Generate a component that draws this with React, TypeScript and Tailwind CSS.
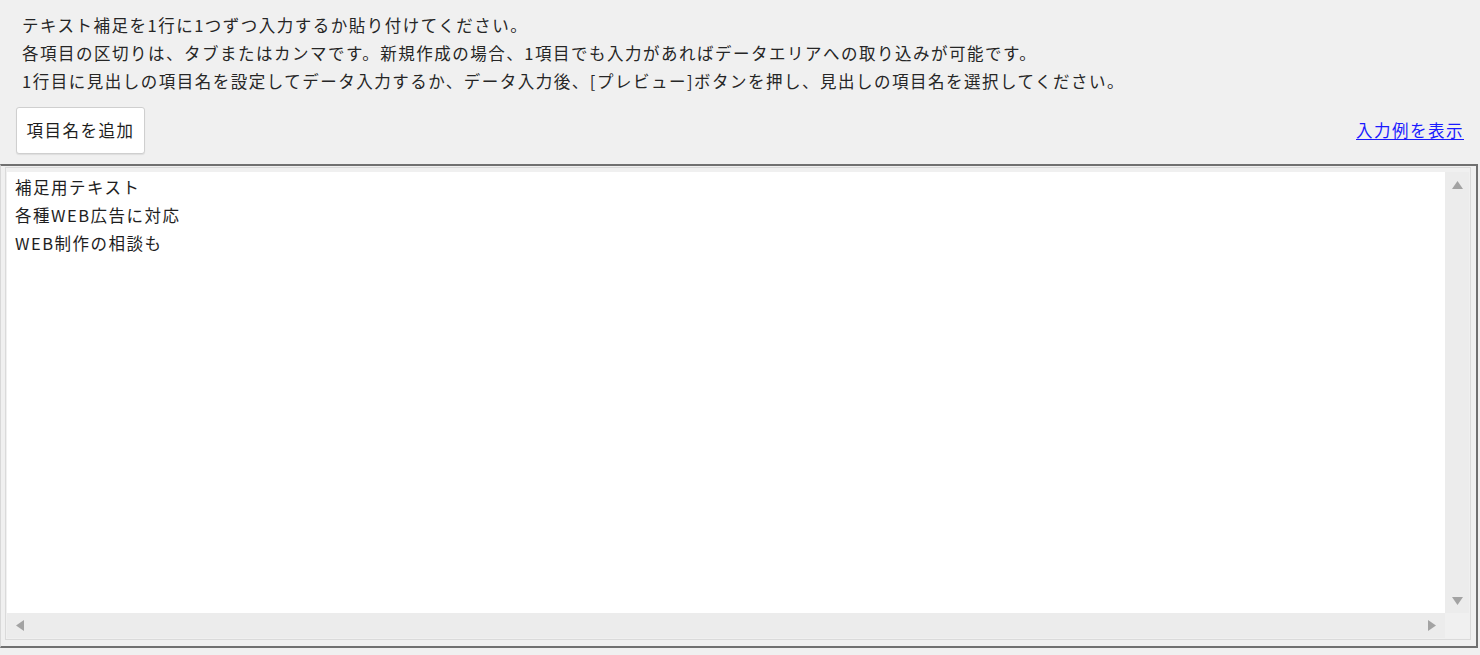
export default function App() {
  const notes = [
    "テキスト補足を1行に1つずつ入力するか貼り付けてください。",
    "各項目の区切りは、タブまたはカンマです。新規作成の場合、1項目でも入力があればデータエリアへの取り込みが可能です。",
    "1行目に見出しの項目名を設定してデータ入力するか、データ入力後、[プレビュー]ボタンを押し、見出しの項目名を選択してください。",
  ];
  const rows = ["補足用テキスト", "各種WEB広告に対応", "WEB制作の相談も"];

  return (
    <div
      className="w-[1480px] h-[655px] overflow-hidden bg-[#f0f0f0] text-[#262626]"
      style={{ fontFamily: '"Noto Sans CJK JP", "Noto Sans", sans-serif' }}
    >
      <div className="pl-[22px] pt-[11px] text-[16.5px] tracking-[1.5px] leading-[28px]">
        {notes.map((n) => (
          <div key={n}>{n}</div>
        ))}
      </div>

      <div className="flex items-center justify-between pl-[16px] pr-[16px] mt-[12px] h-[47px]">
        <button className="w-[129px] h-[47px] bg-white border border-[#cfcfcf] rounded-[3px] shadow-[0_1px_1px_rgba(0,0,0,0.08)] text-[16.5px] tracking-[1.5px] text-[#1e1e1e]">
          項目名を追加
        </button>
        <a href="#" className="text-[16.5px] tracking-[1.5px] text-[#1a1aff] underline underline-offset-2">
          入力例を表示
        </a>
      </div>

      <div className="mt-[10px] w-[1478px] h-[484px] border-t-2 border-r-2 border-b-2 border-[#707070] border-l border-l-[#d8d8d8] pl-[4px] pt-[1px]">
        <div className="w-[1466px] h-[473px] border border-[#dadada] pt-[4px] pl-[1px] pr-[1px] flex flex-col">
          <div className="flex h-[441px]">
            <div className="flex-1 bg-white pl-[8px] pt-[1px] text-[16.5px] tracking-[1.5px] leading-[28px] text-[#1e1e1e]">
              {rows.map((r) => (
                <div key={r}>{r}</div>
              ))}
            </div>
            <div className="w-[24px] bg-[#ececec] flex flex-col items-center justify-between pt-[9px] pb-[8px]">
              <svg width="11" height="8" viewBox="0 0 11 8">
                <path d="M5.5 0 L11 8 L0 8 Z" fill="#a3a3a3" />
              </svg>
              <svg width="11" height="8" viewBox="0 0 11 8">
                <path d="M0 0 L11 0 L5.5 8 Z" fill="#a3a3a3" />
              </svg>
            </div>
          </div>
          <div className="flex h-[25px]">
            <div className="flex-1 bg-[#ececec] flex items-center justify-between pl-[9px] pr-[9px]">
              <svg width="8" height="11" viewBox="0 0 8 11">
                <path d="M8 0 L8 11 L0 5.5 Z" fill="#a3a3a3" />
              </svg>
              <svg width="8" height="11" viewBox="0 0 8 11">
                <path d="M0 0 L8 5.5 L0 11 Z" fill="#a3a3a3" />
              </svg>
            </div>
            <div className="w-[24px] bg-[#f0f0f0]" />
          </div>
        </div>
      </div>
    </div>
  );
}
